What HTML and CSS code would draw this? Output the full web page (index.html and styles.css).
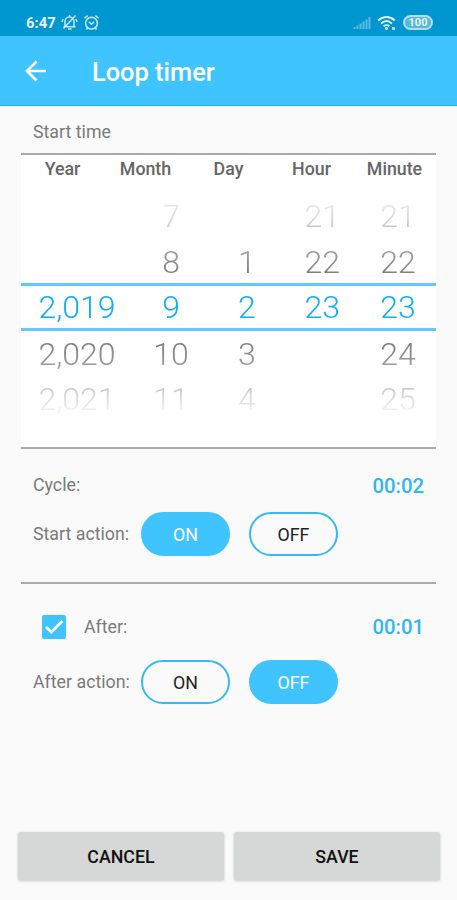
FILE: index.html
```html
<!DOCTYPE html>
<html lang="en">
<head>
<meta charset="utf-8">
<title>Loop timer</title>
<link rel="stylesheet" href="styles.css">
</head>
<body>
<div class="status">
  <span class="clock">6:47</span>
  <svg class="bell" width="17" height="17" viewBox="0 0 17 17"><path d="M4 12.5V7.5a4.5 4.5 0 0 1 9 0v5M2.5 12.8h12M7 15h3.5M14.5 1.5L2.5 14.5M8.5 1v2M1 8l1-3M16 8l-1-3"/></svg>
  <svg class="alarm" width="17" height="17" viewBox="0 0 17 17"><circle cx="8.5" cy="9.2" r="5.9"/><path d="M1.4 4.3l3.2-2.7M15.6 4.3l-3.2-2.7M5.8 7.8l2.7 2.4 2.7-2.4M4.5 14l-1 1.5M12.5 14l1 1.5"/></svg>
  <span class="spacer"></span>
  <svg class="signal" width="18" height="14" viewBox="0 0 18 14"><path d="M1.5 11v2M4.5 9.5V13M7.5 7.5V13M10.5 5.5V13M13.5 3.5V13M16.5 1V13"/></svg>
  <svg class="wifi" width="20" height="16" viewBox="0 0 20 16"><path d="M1.2 5.5c5-4.6 11.6-4.6 16.6 0M4 8.5c3.4-3 7.6-3 11 0M6.7 11.3c1.8-1.5 3.8-1.5 5.6 0"/><circle class="core" cx="9.5" cy="13.5" r="1.4"/><path class="dot" d="M16.5 12v3"/></svg>
  <span class="battery">100</span>
</div>
<header class="bar">
  <svg width="22" height="22" viewBox="0 0 22 22"><path d="M21 11H2M11.5 1.500L2 11l9.500 9.500"/></svg>
  <h1>Loop timer</h1>
</header>
<main>
  <div class="label start">Start time</div>
  <section class="picker">
    <div class="heads"><span>Year</span><span>Month</span><span>Day</span><span>Hour</span><span>Minute</span></div>
    <div class="wheels">
      <div class="row"><span></span><span>7</span><span></span><span>21</span><span>21</span></div>
      <div class="row"><span></span><span>8</span><span>1</span><span>22</span><span>22</span></div>
      <div class="row current"><span>2,019</span><span>9</span><span>2</span><span>23</span><span>23</span></div>
      <div class="row"><span>2,020</span><span>10</span><span>3</span><span></span><span>24</span></div>
      <div class="row"><span>2,021</span><span>11</span><span>4</span><span></span><span>25</span></div>
    </div>
  </section>
  <section class="group cycle">
    <div class="line"><span class="label">Cycle:</span><span class="time">00:02</span></div>
    <div class="line actions"><span class="label">Start action:</span><button class="pill on">ON</button><button class="pill">OFF</button></div>
  </section>
  <section class="group after">
    <div class="line">
      <svg class="check" width="24" height="24" viewBox="0 0 24 24"><rect width="24" height="24" rx="2"/><path d="M4 12l5.3 5.2L20.3 6"/></svg>
      <span class="label">After:</span><span class="time">00:01</span>
    </div>
    <div class="line actions"><span class="label">After action:</span><button class="pill">ON</button><button class="pill on">OFF</button></div>
  </section>
</main>
<footer><button>CANCEL</button><button>SAVE</button></footer>
</body>
</html>
```

FILE: styles.css
```css
* { box-sizing: border-box; }
body {
  margin: 0;
  height: 900px;
  display: flex;
  flex-direction: column;
  background: #fafafa;
  font-family: Roboto, "Liberation Sans", sans-serif;
  overflow: hidden;
}
button { font-family: inherit; padding: 0; border: 0; }
svg { fill: none; stroke: #fff; flex: none; }

.status {
  height: 36px;
  padding: 9px 24px 0 26px;
  display: flex;
  align-items: center;
  background: #0097d0;
  color: #e4f5fc;
}
.clock { width: 35px; font-size: 14.8px; font-weight: 700; }
.bell, .alarm { stroke: #c4e9f7; stroke-width: 1.5; }
.alarm { margin-left: 5px; }
.spacer { flex: 1; }
.signal { stroke: #5bbce1; stroke-width: 2; }
.wifi { margin: 0 6px; stroke: #e2f5fc; stroke-width: 1.9; }
.wifi .core { fill: #e2f5fc; stroke: none; }
.wifi .dot { stroke: #a9dcf0; stroke-width: 3; }
.battery {
  width: 30px;
  height: 15px;
  border: 2px solid #b5dff0;
  border-radius: 8px;
  background: #58b7dd;
  color: #e6f6fc;
  font-size: 11px;
  font-weight: 700;
  line-height: 11px;
  text-align: center;
}

.bar {
  height: 70px;
  padding-left: 25px;
  display: flex;
  align-items: center;
  background: #40c4ff;
  border-bottom: 1px solid #22b2f0;
}
.bar svg { stroke-width: 2.6; }
h1 {
  margin: 3px 0 0 45px;
  color: #fff;
  font-size: 25.4px;
  font-weight: 500;
  line-height: 30px;
}

main { flex: 1; padding: 0 21px; }
.label { color: #7a7a7a; font-size: 17.8px; line-height: 22px; white-space: nowrap; }
.start { height: 47px; padding: 15px 0 0 12px; }
.picker {
  height: 296px;
  background: #fff;
  border-top: 2px solid #aaa;
  border-bottom: 2px solid #aaa;
}
.heads {
  height: 38px;
  padding-top: 3px;
  display: grid;
  grid-template-columns: repeat(5, 1fr);
  text-align: center;
  color: #666;
  font-size: 17.8px;
  font-weight: 500;
  line-height: 22px;
}
.wheels {
  -webkit-mask-image: linear-gradient(#0000 -10px, #0004 25px, #000b 65px, #000 90px, #000 138px, #000b 168px, #0004 203px, #0000 226px);
  mask-image: linear-gradient(#0000 -10px, #0004 25px, #000b 65px, #000 90px, #000 138px, #000b 168px, #0004 203px, #0000 226px);
}
.row {
  height: 45.5px;
  display: grid;
  grid-template-columns: 112px 76px 75.5px 75.5px 76px;
  align-items: center;
  text-align: center;
  color: #707070;
  font-size: 32px;
  font-weight: 300;
  line-height: 46px;
}
.row:nth-child(2) { height: 44.5px; }
.row:nth-child(n+4) { line-height: 44px; }
.row.current {
  height: 48px;
  border-top: 3px solid #66c8fa;
  border-bottom: 3px solid #66c8fa;
  color: #12aef5;
  line-height: 43px;
}

.group .line { display: flex; align-items: center; padding-left: 12px; }
.time { margin-left: auto; margin-right: 12px; color: #30b7f2; font-size: 20.3px; font-weight: 500; line-height: 24px; }
.cycle { height: 135px; padding-top: 25px; border-bottom: 2px solid #aaa; }
.cycle .line:first-child .label { margin-top: -2px; }
.cycle .actions { margin-top: 14px; }
.after { padding-top: 31px; }
.after .actions { margin-top: 21px; }
.after .check { margin: 0 18px 0 9px; }
.check rect { fill: #40c4ff; stroke: none; }
.check path { stroke-width: 2.7; }
.actions .label { width: 108px; }
.pill {
  width: 89px;
  height: 44px;
  margin-right: 19px;
  border: 2px solid #35b9f3;
  border-radius: 22px;
  background: transparent;
  color: #222;
  font-size: 17.8px;
}
.pill.on { background: #40c4ff; border-color: #40c4ff; color: #fff; }

footer { height: 68px; padding: 0 17px 0 18px; display: flex; gap: 10px; }
footer button {
  flex: 1;
  height: 48px;
  border-radius: 2px;
  background: #d6d8d7;
  box-shadow: 0 1px 3px #0003;
  color: #111;
  font-size: 17.8px;
  font-weight: 500;
}
```
